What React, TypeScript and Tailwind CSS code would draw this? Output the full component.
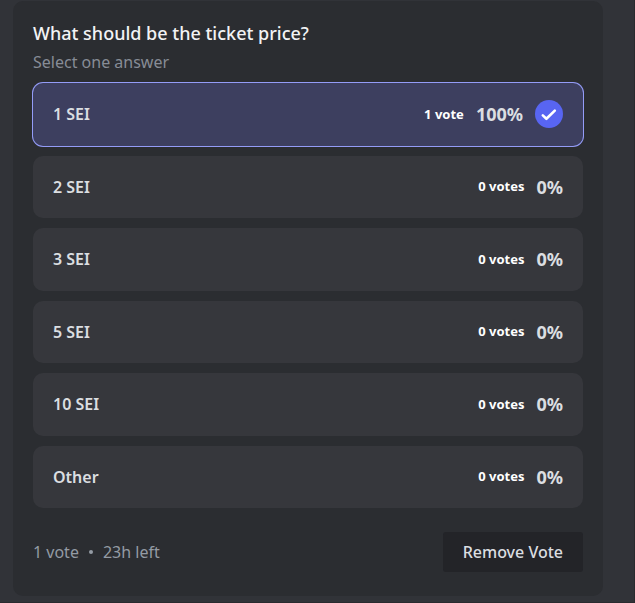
import { useState } from "react";

const answers = ["1 SEI", "2 SEI", "3 SEI", "5 SEI", "10 SEI", "Other"];

function CheckBadge() {
  return (
    <svg className="size-7 shrink-0" viewBox="0 0 28 28" fill="none" aria-hidden="true">
      <circle cx="14" cy="14" r="14" fill="#5865f2" />
      <path d="M7.8 15.4l3.6 3.4L19.8 10.6" stroke="#fff" strokeWidth="2.6" strokeLinecap="round" strokeLinejoin="round" />
    </svg>
  );
}

type AnswerProps = { text: string; selected: boolean; onSelect: () => void };

function Answer({ text, selected, onSelect }: AnswerProps) {
  return (
    <label
      className={`relative flex cursor-pointer items-center rounded-[10px] px-5 ${
        selected ? "bg-[#3d3f5f] ring-1 ring-[#949cf7]" : "bg-[#36373c]"
      }`}
    >
      <input type="radio" name="answer" className="sr-only" checked={selected} onChange={onSelect} />
      <span className="flex-1 text-base font-semibold text-[#dbdee1]">{text}</span>
      <span className="text-[13px] font-bold text-white">{selected ? "1 vote" : "0 votes"}</span>
      <span className="ml-3 text-lg font-bold text-[#dbdee1]">{selected ? "100%" : "0%"}</span>
      {selected && (
        <span className="ml-3">
          <CheckBadge />
        </span>
      )}
    </label>
  );
}

export default function App() {
  const [choice, setChoice] = useState<string | null>("1 SEI");
  return (
    <main className="min-h-screen border-r border-b border-[#292a2e] bg-[#313338] pt-px pr-[31px] pb-1.5 pl-[13px] font-['Noto_Sans',sans-serif]">
      <form className="rounded-[10px] bg-[#2b2d31] p-5 pb-6">
        <fieldset>
          <legend className="text-lg leading-6 font-medium text-[#f2f3f5]">What should be the ticket price?</legend>
          <p className="mt-[5px] text-base leading-6 font-normal text-[#878c96]">Select one answer</p>
          <div className="mt-[9px] grid min-h-[425px] auto-rows-fr gap-2.5">
            {answers.map((text) => (
              <Answer key={text} text={text} selected={choice === text} onSelect={() => setChoice(text)} />
            ))}
          </div>
        </fieldset>
        <div className="mt-6 flex items-center justify-between">
          <p className="flex items-center gap-2.5 text-base font-normal text-[#949ba4]">
            <span>{choice ? "1 vote" : "0 votes"}</span>
            <span className="size-1 rounded-full bg-[#949ba4]" />
            <span>23h left</span>
          </p>
          <button
            type="button"
            onClick={() => setChoice(null)}
            className="h-10 rounded-[3px] bg-[#232428] px-5 text-base font-medium text-[#dbdee1]"
          >
            Remove Vote
          </button>
        </div>
      </form>
    </main>
  );
}
